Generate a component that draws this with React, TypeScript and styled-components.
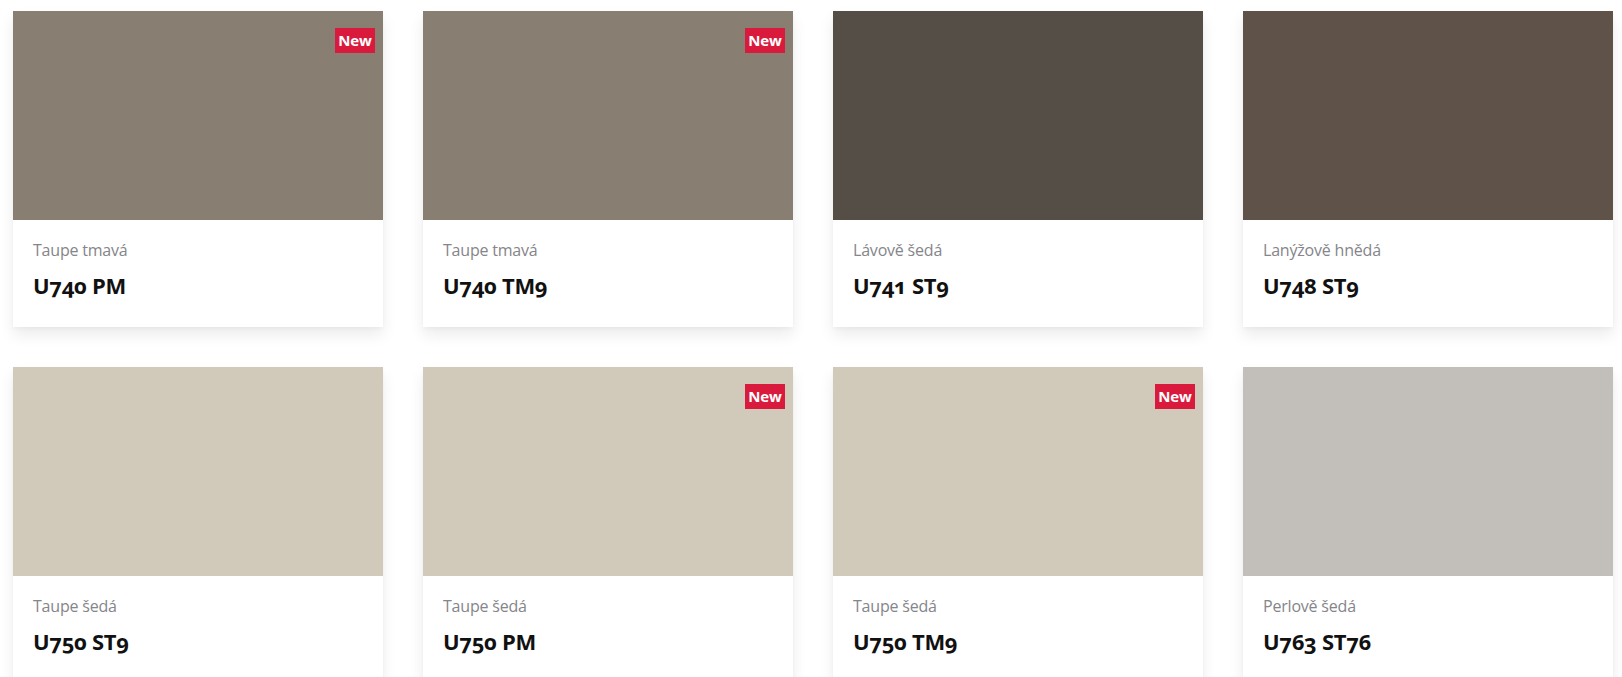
import React from "react";
import styled, { createGlobalStyle } from "styled-components";

const GlobalStyle = createGlobalStyle`
  html, body {
    margin: 0;
    padding: 0;
    background: #ffffff;
    overflow: hidden;
  }
  body {
    font-family: "Noto Sans", "Open Sans", sans-serif;
  }
`;

const Page = styled.main`
  padding: 11px 0 0 13px;
`;

const Grid = styled.div`
  display: grid;
  grid-template-columns: repeat(4, 370px);
  column-gap: 40px;
  row-gap: 40px;
`;

const Card = styled.article`
  background: #ffffff;
  box-shadow: 0 8px 14px rgba(0, 0, 0, 0.08), 0 2px 4px rgba(0, 0, 0, 0.03);
  display: flex;
  flex-direction: column;
`;

const Swatch = styled.div<{ $color: string }>`
  position: relative;
  height: 209px;
  background: ${(p) => p.$color};
`;

const Badge = styled.span`
  position: absolute;
  top: 17px;
  right: 8px;
  width: 40px;
  height: 25px;
  background: #d91a3c;
  color: #ffffff;
  font-family: "Open Sans", "Noto Sans", sans-serif;
  font-weight: 700;
  font-size: 15px;
  line-height: 25px;
  text-align: center;
  letter-spacing: -0.2px;
`;

const Info = styled.div`
  height: 107px;
  box-sizing: border-box;
  padding: 20px 20px 0 20px;
  display: flex;
  flex-direction: column;
`;

const Label = styled.span`
  font-family: "Open Sans", "Noto Sans", sans-serif;
  font-size: 16px;
  line-height: 20px;
  color: #85858a;
  letter-spacing: -0.2px;
`;

const Code = styled.span`
  margin-top: 11px;
  font-family: "Open Sans", "Noto Sans", sans-serif;
  font-weight: 700;
  font-size: 22px;
  line-height: 28px;
  color: #111111;
  letter-spacing: -0.3px;
  font-variant-numeric: oldstyle-nums;
  font-feature-settings: "onum" 1;
`;

type Decor = {
  label: string;
  code: string;
  color: string;
  isNew?: boolean;
};

const decors: Decor[] = [
  { label: "Taupe tmavá", code: "U740 PM", color: "#887e72", isNew: true },
  { label: "Taupe tmavá", code: "U740 TM9", color: "#887e72", isNew: true },
  { label: "Lávově šedá", code: "U741 ST9", color: "#544e47" },
  { label: "Lanýžově hnědá", code: "U748 ST9", color: "#5e5249" },
  { label: "Taupe šedá", code: "U750 ST9", color: "#d1c9b9" },
  { label: "Taupe šedá", code: "U750 PM", color: "#d1c9b9", isNew: true },
  { label: "Taupe šedá", code: "U750 TM9", color: "#d1c9b9", isNew: true },
  { label: "Perlově šedá", code: "U763 ST76", color: "#c2bfbb" },
];

export default function App() {
  return (
    <>
      <GlobalStyle />
      <Page>
        <Grid>
          {decors.map((d, i) => (
            <Card key={i}>
              <Swatch $color={d.color}>{d.isNew && <Badge>New</Badge>}</Swatch>
              <Info>
                <Label>{d.label}</Label>
                <Code>{d.code}</Code>
              </Info>
            </Card>
          ))}
        </Grid>
      </Page>
    </>
  );
}
